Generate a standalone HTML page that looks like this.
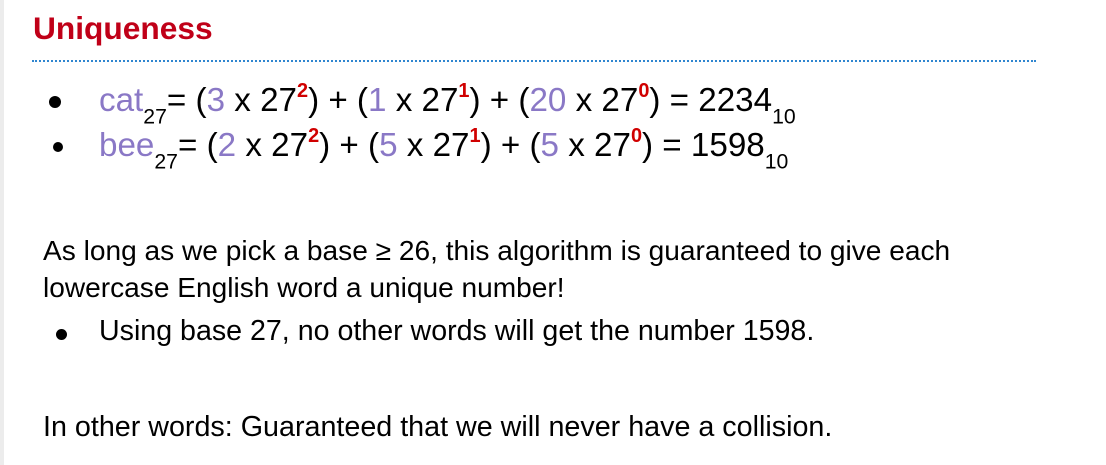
<!DOCTYPE html>
<html><head><meta charset="utf-8"><style>
body{margin:0;width:1106px;height:465px;background:#fff;overflow:hidden;position:relative;font-family:"Liberation Sans",sans-serif;color:#000}
.a{position:absolute;white-space:nowrap}
.p{color:#8a78c6}.r{color:#d00000;font-weight:bold;font-size:60%;vertical-align:0.7em}
.s{font-size:64%;vertical-align:-0.6em}
.dot{position:absolute;width:10px;height:10px;border-radius:50%;background:#000}
</style></head><body>
<div style="position:absolute;left:0;top:0;width:4px;height:465px;background:#ececec"></div>
<div class="a" style="left:33px;top:10px;font-size:31.7px;font-weight:bold;color:#c00018">Uniqueness</div>
<div style="position:absolute;left:32px;top:60px;width:1004px;border-top:2px dotted #2f86d0"></div>
<div class="dot" style="left:49px;top:96px;width:12px;height:12px"></div>
<div class="dot" style="left:53px;top:142px"></div>
<div class="a" style="left:99px;top:80px;font-size:33.2px"><span class="p">cat</span><span class="s">27</span>= (<span class="p">3</span> x 27<span class="r">2</span>) + (<span class="p">1</span> x 27<span class="r">1</span>) + (<span class="p">20</span> x 27<span class="r">0</span>) = 2234<span class="s">10</span></div>
<div class="a" style="left:99px;top:125px;font-size:33.2px"><span class="p">bee</span><span class="s">27</span>= (<span class="p">2</span> x 27<span class="r">2</span>) + (<span class="p">5</span> x 27<span class="r">1</span>) + (<span class="p">5</span> x 27<span class="r">0</span>) = 1598<span class="s">10</span></div>
<div class="a" style="left:43px;top:232px;font-size:28.1px;line-height:37px">As long as we pick a base ≥ 26, this algorithm is guaranteed to give each<br>lowercase English word a unique number!</div>
<div class="dot" style="left:56px;top:329px;width:11px;height:11px"></div>
<div class="a" style="left:99px;top:315px;font-size:28.6px">Using base 27, no other words will get the number 1598.</div>
<div class="a" style="left:43px;top:411px;font-size:28.7px">In other words: Guaranteed that we will never have a collision.</div>
</body></html>
